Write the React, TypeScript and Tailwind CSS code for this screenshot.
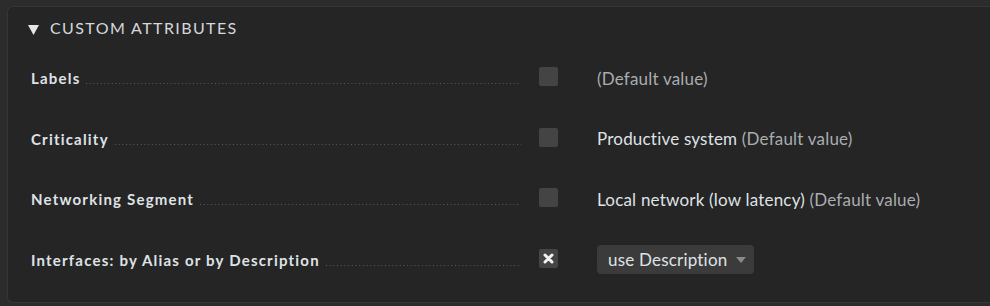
import React from 'react';

type Row = {
  label: string;
  checked: boolean;
  value?: string;
  select?: string;
};

const rows: Row[] = [
  { label: 'Labels', checked: false, value: '' },
  { label: 'Criticality', checked: false, value: 'Productive system' },
  { label: 'Networking Segment', checked: false, value: 'Local network (low latency)' },
  { label: 'Interfaces: by Alias or by Description', checked: true, select: 'use Description' },
];

function Checkbox({ checked }: { checked: boolean }) {
  return (
    <div className="flex h-[19px] w-[19px] shrink-0 items-center justify-center rounded-[2px] bg-[#444444]">
      {checked && (
        <svg width="11" height="11" viewBox="0 0 11 11">
          <path d="M2 2 L9 9 M9 2 L2 9" stroke="#f2f2f2" strokeWidth="3" strokeLinecap="round" />
        </svg>
      )}
    </div>
  );
}

export default function App() {
  return (
    <div
      className="h-[306px] w-[990px] overflow-hidden bg-[#2c2c2c] pl-[7px] pt-[6px]"
      style={{ fontFamily: 'Lato, "Open Sans", sans-serif' }}
    >
      <div className="h-[297px] rounded-l-[6px] border-y border-l border-[#363636] bg-[#252525]">
        <div className="flex h-[41px] items-center pl-[20px]">
          <svg width="11" height="10" viewBox="0 0 11 10" className="mt-[5px]">
            <path d="M0 0 L11 0 L5.5 10 Z" fill="#e4e6e8" />
          </svg>
          <span className="ml-[11px] text-[16px] tracking-[1.4px] text-[#d4d8dc]">CUSTOM ATTRIBUTES</span>
        </div>

        {rows.map((row) => (
          <div key={row.label} className="flex h-[60.5px] items-center">
            <div className="flex w-[513px] items-baseline pl-[23px]">
              <span className="whitespace-nowrap text-[15px] font-bold tracking-[1.2px] text-[#dfe2e6]">
                {row.label}
              </span>
              <div className="ml-[6px] h-[1px] flex-1 bg-[linear-gradient(to_right,#5c5c5c_1px,transparent_1px)] bg-[length:3.7px_1px]" />
            </div>
            <div className="ml-[18px] -mt-[3px]">
              <Checkbox checked={row.checked} />
            </div>
            <div className="ml-[39px] text-[17px] tracking-[0.2px] text-[#dfe2e6]">
              {row.select ? (
                <div className="flex h-[29px] w-[157px] items-center rounded-[4px] bg-[#3b3b3b] pl-[11px]">
                  <span>{row.select}</span>
                  <svg width="10" height="6" viewBox="0 0 10 6" className="ml-[9px]">
                    <path d="M0 0 L10 0 L5 6 Z" fill="#8a8a8a" />
                  </svg>
                </div>
              ) : (
                <span>
                  {row.value ? row.value + ' ' : ''}
                  <span className="text-[#a9adb1]">(Default value)</span>
                </span>
              )}
            </div>
          </div>
        ))}
      </div>
    </div>
  );
}
